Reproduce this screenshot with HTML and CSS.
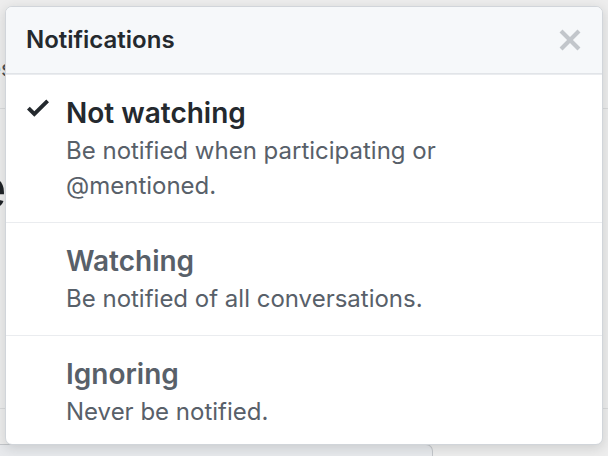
FILE: index.html
```html
<!DOCTYPE html>
<html>
<head>
<meta charset="utf-8">
<link rel="stylesheet" href="styles.css">
</head>
<body>
<div class="page">
  <div class="backdrop">
    <div class="bg-nav"><span class="bg-nav-text">Issues</span></div>
    <div class="bg-heading">e</div>
    <div class="bg-rule"></div>
    <div class="bg-button"></div>
  </div>

  <div class="menu">
    <div class="menu-header">
      <span class="menu-title">Notifications</span>
      <svg class="menu-close" width="24" height="32" viewBox="0 0 12 16" aria-hidden="true">
        <path d="M7.48 8l3.75 3.75-1.48 1.48L6 9.48l-3.75 3.75-1.48-1.48L4.52 8 .77 4.25l1.48-1.48L6 6.52l3.75-3.75 1.48 1.48L7.48 8z"/>
      </svg>
    </div>
    <div class="menu-item selected">
      <div class="item-icon">
        <svg class="check" width="22" height="29.33" viewBox="0 0 12 16" aria-hidden="true">
          <path d="M12 5l-8 8-4-4 1.5-1.5L4 10l6.5-6.5L12 5z"/>
        </svg>
      </div>
      <div class="item-body">
        <div class="item-title">Not watching</div>
        <div class="item-desc">Be notified when participating or @mentioned.</div>
      </div>
    </div>
    <div class="menu-item">
      <div class="item-icon"></div>
      <div class="item-body">
        <div class="item-title">Watching</div>
        <div class="item-desc">Be notified of all conversations.</div>
      </div>
    </div>
    <div class="menu-item">
      <div class="item-icon"></div>
      <div class="item-body">
        <div class="item-title">Ignoring</div>
        <div class="item-desc">Never be notified.</div>
      </div>
    </div>
  </div>
</div>
</body>
</html>
```

FILE: styles.css
```css
* { box-sizing: border-box; }

html, body {
  margin: 0;
  padding: 0;
  background: #ededed;
}

body {
  font-family: Inter, "Liberation Sans", sans-serif;
  width: 608px;
  height: 456px;
  overflow: hidden;
}

.page {
  position: relative;
  width: 608px;
  height: 456px;
  overflow: hidden;
}

/* dimmed page content behind the dropdown */
.backdrop {
  display: flex;
  flex-direction: column;
  height: 456px;
}

.backdrop > * {
  flex: none;
}

.bg-nav {
  height: 109px;
  border-bottom: 1px solid #d9dadb;
  padding-top: 56px;
  overflow: hidden;
}

.bg-nav-text {
  display: block;
  margin-left: -54px;
  font-size: 22px;
  line-height: 24px;
  color: #4a4f55;
}

.bg-heading {
  margin-top: 49px;
  margin-left: -27px;
  font-size: 58px;
  line-height: 60px;
  font-weight: 400;
  color: #1e2226;
  white-space: nowrap;
}

.bg-rule {
  margin-top: 190px;
  border-top: 1px solid #d9dadb;
}

.bg-button {
  margin-top: 35px;
  width: 433px;
  height: 30px;
  background: #e7e9ec;
  border: 1px solid #c3c6ca;
  border-radius: 0 7px 0 0;
  border-left: none;
}

/* dropdown */
.menu {
  position: absolute;
  left: 5px;
  top: 6px;
  width: 598px;
  background: #fff;
  border: 1px solid #d1d5da;
  border-radius: 7px;
  box-shadow: 0 3px 12px rgba(27, 31, 35, 0.15);
  overflow: hidden;
}

.menu-header {
  display: flex;
  align-items: center;
  justify-content: space-between;
  padding: 17px 20px;
  background: #f6f8fa;
  border-bottom: 1px solid #e1e4e8;
}

.menu-title {
  font-size: 24px;
  line-height: 32px;
  font-weight: 600;
  color: #24292e;
}

.menu-close {
  display: block;
  fill: #c2c6cb;
}

.menu-item {
  display: flex;
  padding: 20px 20px 19px 21px;
  border-top: 1px solid #eaecef;
}

.menu-item:first-of-type {
  border-top: none;
}

.menu-item:last-child {
  padding-bottom: 15px;
}

.item-icon {
  flex: 0 0 22px;
  margin-right: 17px;
}

.check {
  display: block;
  margin-top: -2px;
  fill: #24292e;
}

.item-body {
  flex: 1;
  min-width: 0;
}

.item-title {
  font-size: 28px;
  line-height: 36px;
  font-weight: 600;
  color: #586069;
}

.selected .item-title {
  color: #24292e;
}

.item-desc {
  margin-top: 2px;
  max-width: 420px;
  font-size: 24px;
  line-height: 35px;
  color: #586069;
}
```
